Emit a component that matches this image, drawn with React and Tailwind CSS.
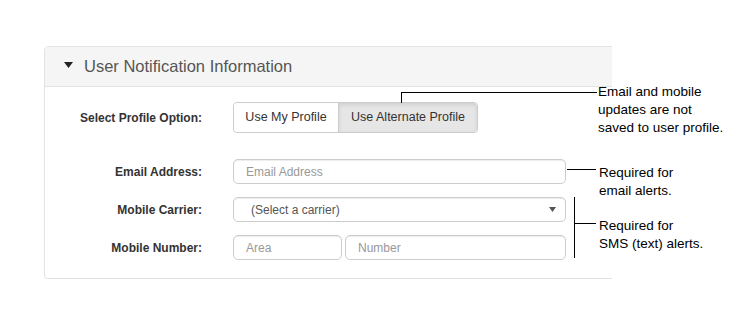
import React from "react";

function Callout({ className, lines }) {
    return (
        <div className={"absolute text-[13.5px] leading-[18px] text-black " + className}>
            {lines.map((l) => (
                <div key={l}>{l}</div>
            ))}
        </div>
    );
}

export default function App() {
    const inputClass =
        "h-[25px] rounded-[5px] border border-[#cccccc] px-3 text-[12px] text-[#555] placeholder-[#999] shadow-[inset_0_1px_1px_rgba(0,0,0,0.075)] outline-none";

    return (
        <div className="relative w-[756px] h-[318px] bg-white font-['Liberation_Sans',Arial,sans-serif] overflow-hidden">
            <div className="pt-[46px] pl-[44px]">
                <div className="w-[568px] overflow-hidden">
                    <div className="w-[620px] rounded-[4px] border border-[#e3e3e3] shadow-[0_1px_1px_rgba(0,0,0,0.05)]">
                        <div className="flex h-[40px] items-center gap-[11px] border-b border-[#e3e3e3] bg-[#f5f5f5] pl-[19px]">
                            <svg width="9" height="6" viewBox="0 0 9 6" className="mb-[4px]">
                                <path d="M0 0 H9 L4.5 6 Z" fill="#222" />
                            </svg>
                            <span className="text-[16.5px] text-[#555]">User Notification Information</span>
                        </div>

                        <div className="grid grid-cols-[157px_333px] gap-x-[31px] pt-[15px] pb-[18px] items-center">
                            <label className="text-right text-[12px] font-bold text-[#333]">Select Profile Option:</label>
                            <div className="flex h-[31px] w-fit rounded-[4px] border border-[#cccccc] text-[12.5px] text-[#333]">
                                <button className="w-[104px] bg-white rounded-l-[4px]">Use My Profile</button>
                                <button className="w-[139px] border-l border-[#cccccc] bg-[#e6e6e6] rounded-r-[4px] shadow-[inset_0_2px_4px_rgba(0,0,0,0.1)]">
                                    Use Alternate Profile
                                </button>
                            </div>

                            <label className="mt-[26px] text-right text-[12px] font-bold text-[#333]">Email Address:</label>
                            <input className={"mt-[26px] w-full " + inputClass} placeholder="Email Address" />

                            <label className="mt-[13px] text-right text-[12px] font-bold text-[#333]">Mobile Carrier:</label>
                            <div className={"mt-[13px] flex items-center justify-between pl-[17px] pr-[9px] " + inputClass}>
                                <span>(Select a carrier)</span>
                                <svg width="7" height="5" viewBox="0 0 7 5">
                                    <path d="M0 0 H7 L3.5 5 Z" fill="#555" />
                                </svg>
                            </div>

                            <label className="mt-[13px] text-right text-[12px] font-bold text-[#333]">Mobile Number:</label>
                            <div className="mt-[13px] flex gap-[3px]">
                                <input className={"w-[109px] " + inputClass} placeholder="Area" />
                                <input className={"w-[221px] " + inputClass} placeholder="Number" />
                            </div>
                        </div>
                    </div>
                </div>
            </div>

            {/* callout lines */}
            <div className="absolute left-[401px] top-[92px] w-[196px] h-[11px] border-l border-t border-black" />
            <div className="absolute left-[567px] top-[169px] w-[29px] border-t border-black" />
            <div className="absolute left-[574px] top-[197px] h-[61px] border-l border-black" />
            <div className="absolute left-[575px] top-[223px] w-[21px] border-t border-black" />

            <Callout className="left-[598px] top-[83px]" lines={["Email and mobile", "updates are not", "saved to user profile."]} />
            <Callout className="left-[599px] top-[164px]" lines={["Required for", "email alerts."]} />
            <Callout className="left-[599px] top-[217px]" lines={["Required for", "SMS (text) alerts."]} />
        </div>
    );
}
